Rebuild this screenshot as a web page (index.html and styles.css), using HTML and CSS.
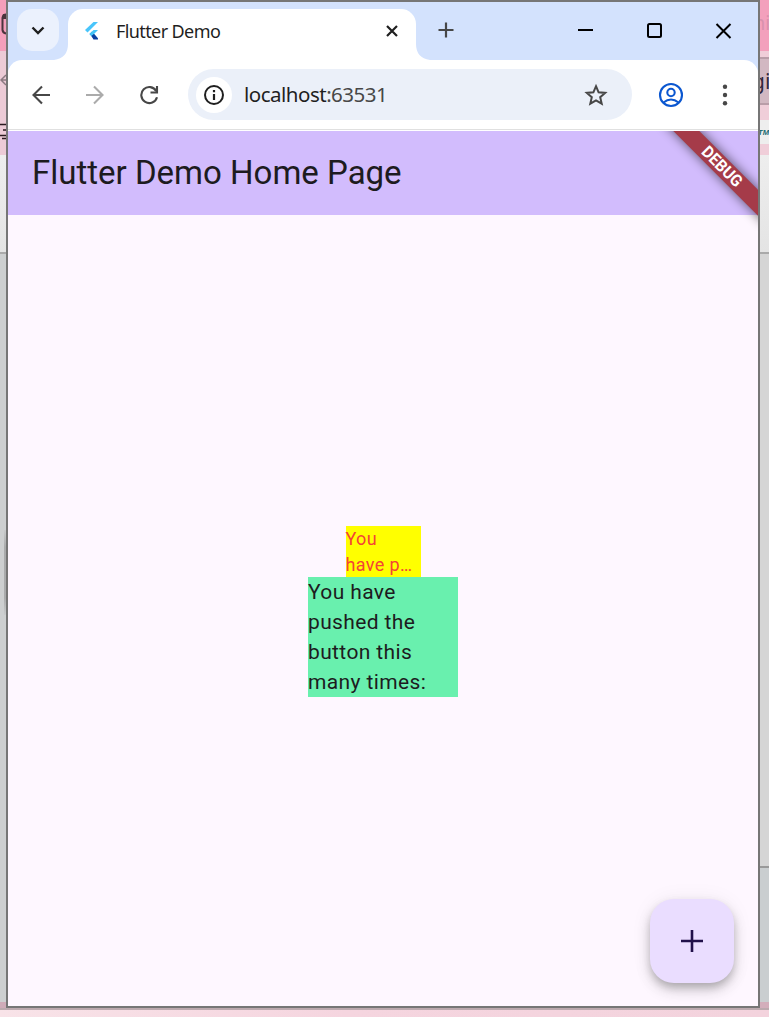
FILE: index.html
```html
<!DOCTYPE html>
<html lang="en">
<head>
<meta charset="utf-8">
<title>Flutter Demo</title>
<link rel="stylesheet" href="styles.css">
</head>
<body>
<div class="desktop">
  <svg class="edge-left" width="6" height="1008" viewBox="0 0 6 1008" aria-hidden="true">
    <defs>
      <linearGradient id="card" x1="0" y1="0" x2="0" y2="1"><stop offset="0" stop-color="#eeeeee"/><stop offset="1" stop-color="#e4e4e4"/></linearGradient>
      <linearGradient id="shade" x1="0" y1="0" x2="0" y2="1"><stop offset="0" stop-color="#c8cacb"/><stop offset=".2" stop-color="#aaabac"/><stop offset=".8" stop-color="#aaabac"/><stop offset="1" stop-color="#c8cacb"/></linearGradient>
    </defs>
    <rect width="6" height="51" fill="#f49fbb"/>
    <rect y="51" width="6" height="104" fill="#eccbd6"/>
    <path d="M6 14.500Q3 14.500 2.500 18V30Q3 33 6 33.500" fill="none" stroke="#4b343d" stroke-width="2"/>
    <path d="M3 14h3v5H2z" fill="#4b343d"/>
    <path d="M6 75L1 80L6 85M1 80H6" fill="none" stroke="#8b7a81" stroke-width="1.500"/>
    <path d="M0 124.500H6M3 130H6M0 135.500H6M2 138.500H6" stroke="#28191f" stroke-width="1.300"/>
    <rect y="155" width="6" height="97" fill="url(#card)"/>
    <rect y="252" width="6" height="2" fill="#aaa"/>
    <rect y="254" width="6" height="748" fill="#cdcfd0"/>
    <rect y="530" x="4" width="2" height="85" fill="url(#shade)"/>
    <rect y="1002" width="6" height="6" fill="#cfabb8"/>
  </svg>

  <div class="window">
    <div class="tabstrip">
      <div class="tab-search">
        <svg width="42" height="42" viewBox="0 0 42 42"><path d="M15.500 18.500L21 24L26.500 18.500" fill="none" stroke="#1f1f1f" stroke-width="2.400"/></svg>
      </div>
      <div class="tab">
        <svg class="tab-foot" width="376" height="52" viewBox="0 0 376 52"><path d="M0 52Q14 50 14 36V52ZM362 52V36Q362 50 376 52Z" fill="#fff"/></svg>
        <svg class="logo" width="18" height="20" viewBox="0 0 18 20">
          <path d="M10.500 1H15L4.500 11.500L2 9Z" fill="#49c5fb"/>
          <path d="M6.500 13L9 10.500L15 17.500H10.500Z" fill="#087bd0"/>
          <path d="M6.500 13L10.500 9H15L11 13L8.500 15Z" fill="#43c4f7"/>
          <path d="M8.500 15L11 13L15 17.500V18.500H10.500Z" fill="#0a3f9f"/>
        </svg>
        <span class="tab-title">Flutter Demo</span>
        <svg class="tab-close" width="14" height="14" viewBox="0 0 14 14"><path d="M2 2L12 12M12 2L2 12" stroke="#1f1f1f" stroke-width="2.200"/></svg>
      </div>
      <svg class="new-tab" width="16" height="16" viewBox="0 0 16 16"><path d="M8 .5V15.500M.5 8H15.500" stroke="#474747" stroke-width="2.200"/></svg>
      <svg class="controls" width="158" height="20" viewBox="0 0 158 20" fill="none" stroke="#000" stroke-width="2"><path d="M1 9H16"/><rect x="71" y="3" width="13" height="13" rx="1.500"/><path d="M139.500 3L153.500 17M153.500 3L139.500 17"/></svg>
    </div>

    <div class="toolbar">
      <svg class="nav" width="128" height="20" viewBox="0 0 128 20" fill="none" stroke-width="2.100">
        <path d="M18 10H1.500M10 1.500L1.500 10L10 18.500" stroke="#474747"/>
        <path d="M54 10H70.500M62 1.500L70.500 10L62 18.500" stroke="#ababab"/>
        <path d="M124.300 6.200A8 8 0 1 0 125 12.200" stroke="#474747"/>
        <path d="M125 1V7.500H118.500" stroke="#474747"/>
      </svg>
      <div class="omnibox">
        <span class="site-info"><svg width="22" height="22" viewBox="0 0 22 22"><circle cx="11" cy="11" r="9" fill="none" stroke="#1f1f1f" stroke-width="2"/><path d="M11 10V16M11 6V8.200" stroke="#1f1f1f" stroke-width="2.200"/></svg></span>
        <span class="url">localhost<span class="port">:63531</span></span>
        <svg class="star" width="24" height="24" viewBox="0 0 24 24"><path d="M12 3.200L14.600 9.300L21.200 9.900L16.200 14.200L17.700 20.700L12 17.300L6.300 20.700L7.800 14.200L2.800 9.900L9.400 9.300Z" fill="none" stroke="#474747" stroke-width="2"/></svg>
      </div>
      <svg class="profile" width="26" height="26" viewBox="0 0 26 26" fill="none" stroke="#0b57d0" stroke-width="2.100"><circle cx="13" cy="13" r="11"/><circle cx="13" cy="10.500" r="3.700"/><path d="M5.500 20.500Q13 14.500 20.500 20.500"/></svg>
      <svg class="more" width="6" height="22" viewBox="0 0 6 22" fill="#474747"><circle cx="3" cy="2.700" r="2.200"/><circle cx="3" cy="11" r="2.200"/><circle cx="3" cy="19.200" r="2.200"/></svg>
    </div>

    <div class="page">
      <header class="appbar">Flutter Demo Home Page</header>
      <main class="content">
        <div class="yellow">You<br>have p…</div>
        <div class="green">You have pushed the button this many times:</div>
      </main>
      <svg class="banner" width="110" height="100" viewBox="0 0 110 100">
        <defs><filter id="blur" x="-30%" y="-30%" width="160%" height="160%"><feGaussianBlur stdDeviation="6"/></filter></defs>
        <path d="M15 -10.500L41 -10.500L120 68.500V94.500Z" fill="#000" opacity=".6" filter="url(#blur)"/>
        <path d="M25.300 0H51.300L110 58.700V84.700Z" fill="#a53b49"/>
        <text class="banner-text" transform="translate(74 35.500) rotate(45)" x="0" y="5.500" text-anchor="middle" textLength="50" lengthAdjust="spacingAndGlyphs">DEBUG</text>
      </svg>
      <button class="fab" aria-label="Increment"><svg width="22" height="22" viewBox="0 0 22 22"><path d="M11 0V22M0 11H22" stroke="#21104a" stroke-width="2.600"/></svg></button>
    </div>
  </div>

  <svg class="edge-right" width="9" height="1008" viewBox="0 0 9 1008">
    <rect width="9" height="51" fill="#f3a0bc"/>
    <rect y="51" width="9" height="104" fill="#f0ced9"/>
    <text class="edge-tab" x="-6.500" y="30">ni</text>
    <rect y="57" width="9" height="48" fill="#b99da8"/><rect y="59" width="9" height="44" fill="#d2b8c2"/>
    <text class="edge-url" x="-8" y="89">gi</text>
    <rect y="120" width="9" height="24" fill="#eee"/>
    <text class="edge-mark" x="-2" y="134.500" textLength="11" lengthAdjust="spacingAndGlyphs">TM</text>
    <rect y="155" width="9" height="97" fill="url(#card)"/>
    <rect y="252" width="9" height="2" fill="#a9a9a9"/>
    <rect y="254" width="9" height="613" fill="#d5d5d5"/>
    <rect y="866" width="9" height="2" fill="#999"/>
    <rect y="868" width="9" height="134" fill="#caced0"/>
    <rect y="1002" width="9" height="6" fill="#d3aebb"/>
  </svg>
  <div class="edge-bottom"></div>
</div>
</body>
</html>
```

FILE: styles.css
```css
* { box-sizing: border-box; }
body { margin: 0; overflow: hidden; }
svg { display: block; flex: none; }

.desktop {
  display: grid;
  grid-template-columns: 6px 754px 9px;
  grid-template-rows: 1008px 9px;
  width: 769px;
  height: 1017px;
}
.edge-bottom {
  grid-column: 1 / -1;
  border-top: 2px solid #bca9ae;
  background: linear-gradient(90deg, #f8e3e8, #f5d5df 45%, #f3d3dd);
}

.window {
  display: flex;
  flex-direction: column;
  border: 2px solid #767676;
  background: #d3e2fd;
}

.tabstrip { display: flex; height: 58px; padding: 7px 0 0 9px; }
.tab-search { width: 42px; height: 42px; border-radius: 15px; background: #ebf1fd; }
.tab {
  position: relative;
  display: flex;
  align-items: center;
  width: 348px;
  height: 51px;
  margin-left: 9px;
  padding: 0 17px 8px 15px;
  border-radius: 15px 15px 0 0;
  background: #fff;
}
.tab-foot { position: absolute; left: -14px; bottom: 0; }
.logo { margin-right: 15px; }
.tab-title {
  flex: 1;
  color: #1f1f1f;
  font: 18px/26px "Noto Sans", sans-serif;
  letter-spacing: -0.6px;
  white-space: nowrap;
}
.new-tab { margin: 13px 0 0 22px; }
.controls { margin: 12px 23px 0 auto; }

.toolbar {
  display: flex;
  align-items: center;
  height: 70px;
  margin-bottom: 1px;
  padding: 0 30px 0 24px;
  border-bottom: 1px solid #e0e0e0;
  border-radius: 14px 14px 0 0;
  background: #fff;
  box-shadow: 0 1px #fff;
}
.nav { margin-right: 28px; }
.omnibox {
  display: flex;
  align-items: center;
  width: 444px;
  height: 51px;
  padding: 0 24px 0 8px;
  border-radius: 26px;
  background: #ebf0f9;
}
.site-info {
  display: grid;
  place-items: center;
  width: 36px;
  height: 36px;
  border-radius: 50%;
  background: #fff;
}
.url {
  flex: 1;
  padding: 0 0 2px 12px;
  color: #1f1f1f;
  font: 20.500px/30px "Noto Sans", sans-serif;
  letter-spacing: -0.5px;
}
.port { color: #474747; }
.profile { margin-left: 26px; }
.more { margin-left: auto; }

.page {
  position: relative;
  display: flex;
  flex: 1;
  flex-direction: column;
  min-height: 0;
  overflow: hidden;
  background: #fef7ff;
  font-family: Roboto, sans-serif;
}
.appbar {
  height: 84px;
  padding-left: 24px;
  background: #d2bcfd;
  color: #1d1b20;
  font-size: 33px;
  line-height: 84px;
}
.content {
  display: flex;
  flex: 1;
  flex-direction: column;
  align-items: center;
  justify-content: center;
  padding-top: 1px;
}
.yellow {
  width: 75px;
  height: 51px;
  background: #ff0;
  color: #f44336;
  font-size: 18px;
  line-height: 26px;
  letter-spacing: .375px;
  white-space: nowrap;
}
.green {
  width: 150px;
  height: 120px;
  background: #69f0ae;
  color: #1d1b20;
  font-size: 21px;
  line-height: 30px;
  letter-spacing: .375px;
}
.banner { position: absolute; top: 0; right: 0; }
.banner-text { fill: #fff; font: 700 16.500px Roboto, sans-serif; }
.fab {
  position: absolute;
  right: 24px;
  bottom: 23px;
  display: grid;
  place-items: center;
  width: 84px;
  height: 84px;
  padding: 0;
  border: 0;
  border-radius: 24px;
  background: #eaddff;
  box-shadow: 0 5px 8px -1px rgba(0,0,0,.22), 0 8px 15px rgba(0,0,0,.12), 0 1px 22px rgba(0,0,0,.06);
}

.edge-tab { fill: #d991ad; font: 19px "Noto Sans", sans-serif; }
.edge-url { fill: #33283d; font: 21px "Noto Sans", sans-serif; }
.edge-mark { fill: #16666d; font: italic 900 8px "Liberation Sans", sans-serif; }
```
